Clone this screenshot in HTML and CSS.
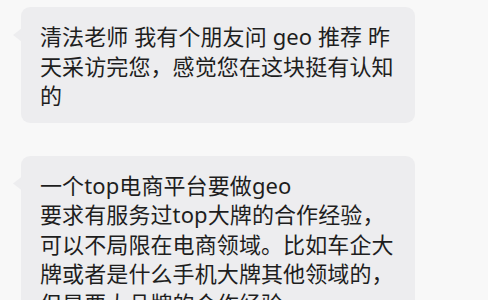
FILE: index.html
```html
<!DOCTYPE html>
<html lang="zh-CN">
<head>
    <meta charset="UTF-8">
    <meta name="viewport" content="width=device-width, initial-scale=1.0">
    <title>聊天记录</title>
    <link rel="stylesheet" href="styles.css">
</head>
<body>

<div class="chat">
    <!-- incoming messages -->
    <div class="bubble">
        清法老师 我有个朋友问 geo 推荐 昨天采访完您，感觉您在这块挺有认知的
    </div>

    <div class="bubble">
        一个top电商平台要做geo<br>
        要求有服务过top大牌的合作经验，可以不局限在电商领域。比如车企大牌或者是什么手机大牌其他领域的，但是要大品牌的合作经验。
    </div>
</div>

</body>
</html>
```

FILE: styles.css
```css
body {
    margin: 0;
    padding: 0;
    background-color: #f8f8f8;
    font-family: "Noto Sans", "Noto Sans CJK SC", sans-serif;
    color: #1e1e1e;
    overflow: hidden;
}

.chat {
    display: flex;
    flex-direction: column;
    align-items: flex-start;
    gap: 33px;
    padding: 7px 0 0 21px;
}

.bubble {
    position: relative;
    width: 356px;
    padding: 15px 19px 12px 19px;
    background-color: #ededef;
    border-radius: 9px;
    font-size: 22px;
    line-height: 29.5px;
    letter-spacing: 0.1px;
}

/* little tail on the left side */
.bubble::before {
    content: "";
    position: absolute;
    left: -8px;
    top: 21px;
    width: 9px;
    height: 14px;
    background-color: #ededef;
    clip-path: polygon(100% 0, 0 50%, 100% 100%);
}
```
